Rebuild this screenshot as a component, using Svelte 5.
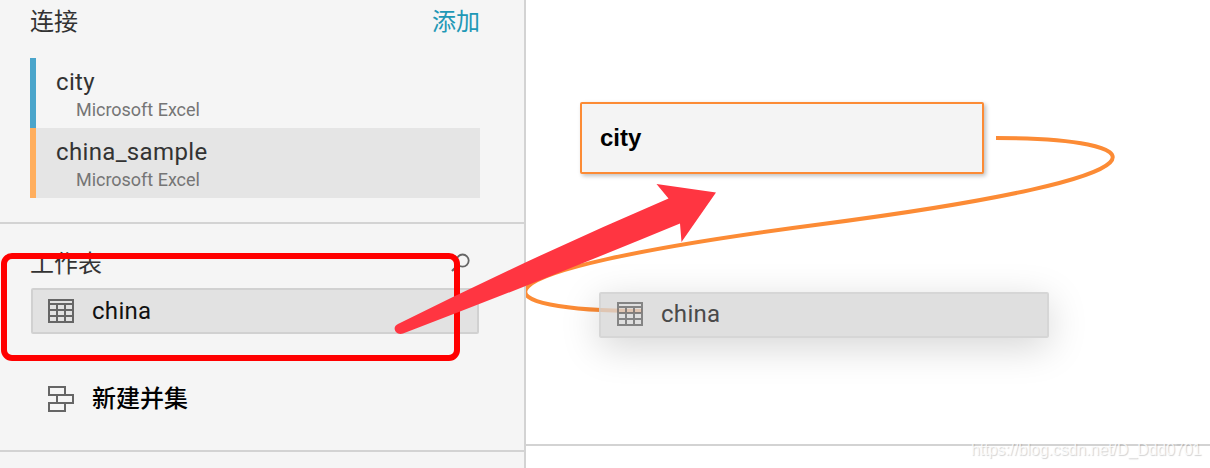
<script>
  const connections = [
    { name: 'city', type: 'Microsoft Excel', color: '#4aa5cb', selected: false },
    { name: 'china_sample', type: 'Microsoft Excel', color: '#ffae5e', selected: true }
  ];
</script>

{#snippet tableIcon()}
  <svg class="icon" width="26" height="24" viewBox="0 0 26 24" fill="none" stroke="#666" stroke-width="2">
    <path d="M1 1H25V23H1ZM1 5H25M1 11H25M1 17H25M9 5V23M17 5V23" />
  </svg>
{/snippet}

<div class="app">
  <aside>
    <section class="connections">
      <header>
        <h2>连接</h2>
        <a class="add" href="#add">添加</a>
      </header>
      <ul>
        {#each connections as c}
          <li class:selected={c.selected} style="border-color: {c.color}">
            <span class="name">{c.name}</span>
            <span class="type">{c.type}</span>
          </li>
        {/each}
      </ul>
    </section>

    <section class="sheets">
      <header>
        <h2>工作表</h2>
        <svg class="search" width="20" height="20" viewBox="0 0 20 20" fill="none" stroke="#666" stroke-width="1.8">
          <circle cx="12.6" cy="7.6" r="6.1" />
          <path d="M8 12L2 18" stroke-width="2.2" />
        </svg>
      </header>
      <div class="sheet">
        {@render tableIcon()}
        <span class="sheet-name">china</span>
      </div>
      <div class="union">
        <svg class="icon" width="26" height="26" viewBox="0 0 26 26" fill="none" stroke="#666" stroke-width="2">
          <path d="M1 1H17V9H1ZM9 9H25V17H9ZM1 17H17V25H1Z" />
        </svg>
        <span>新建并集</span>
      </div>
    </section>
  </aside>

  <main>
    <div class="canvas">
      <svg class="link" width="684" height="444" viewBox="526 0 684 444" fill="none">
        <path d="M996 138C1151 138 1204 174.4 819 224.5S487 311 642 311" stroke="#fc8b35" stroke-width="4" />
      </svg>
      <div class="node">city</div>
      <div class="ghost">
        {@render tableIcon()}
        <span class="sheet-name">china</span>
      </div>
    </div>
  </main>

  <div class="highlight"></div>
  <svg class="arrow" width="1210" height="468" viewBox="0 0 1210 468">
    <path
      d="M398 324Q532 257 668.5 198.5L656.5 184L716 192.5L681.5 242L680 223.5Q541 281 403 333.5C396 336 391 327 398 324Z"
      fill="#ff3541"
    />
  </svg>
  <span class="watermark">https://blog.csdn.net/D_Ddd0701</span>
</div>

<style>
  :global(body) {
    margin: 0;
    overflow: hidden;
  }
  .app {
    position: relative;
    display: flex;
    width: 1210px;
    height: 468px;
    overflow: hidden;
    background: #fff;
    font-family: Roboto, 'Noto Sans CJK SC', sans-serif;
    color: #333;
  }
  aside {
    box-sizing: border-box;
    width: 526px;
    background: #f5f5f5;
    border-right: 2px solid #d3d3d3;
  }
  section {
    box-sizing: border-box;
    border-bottom: 2px solid #d3d3d3;
  }
  header {
    display: flex;
    justify-content: space-between;
    height: 36px;
  }
  h2,
  .add {
    margin: 0;
    font: 400 24px/32px 'Noto Sans CJK SC', sans-serif;
  }
  .add {
    color: #1f98b6;
    text-decoration: none;
  }
  .connections {
    height: 224px;
    padding: 4px 44px 0 30px;
  }
  ul {
    list-style: none;
    margin: 18px 0 0;
    padding: 0;
  }
  li {
    box-sizing: border-box;
    display: flex;
    flex-direction: column;
    height: 70px;
    padding: 9px 0 0 20px;
    border-left: 6px solid;
  }
  .selected {
    background: #e5e5e5;
  }
  .name {
    font-size: 24px;
    line-height: 30px;
    letter-spacing: 0.35px;
  }
  .type {
    margin-left: 20px;
    font-size: 18px;
    line-height: 26px;
    letter-spacing: -0.02px;
    color: #757575;
  }
  .sheets {
    height: 228px;
    padding: 22px 45px 0 31px;
  }
  .sheets h2 {
    margin-left: -1px;
  }
  .search {
    margin: 7px 9px 0 0;
  }
  .sheet,
  .ghost {
    box-sizing: border-box;
    display: flex;
    align-items: center;
    height: 46px;
    margin-top: 6px;
    padding-left: 15px;
    border: 2px solid #d1d1d1;
    border-radius: 2px;
    background: #e2e2e2;
    color: #111;
    font-size: 24px;
    line-height: 30px;
  }
  .icon {
    flex: none;
    margin-right: 18px;
  }
  .sheet-name {
    letter-spacing: 0.3px;
  }
  .union {
    display: flex;
    align-items: center;
    height: 40px;
    margin-top: 45px;
    padding-left: 17px;
    color: #000;
    font: 500 24px/36px 'Noto Sans CJK SC', sans-serif;
  }
  .union span {
    padding-bottom: 4px;
  }
  main {
    flex: 1;
  }
  .canvas {
    position: relative;
    height: 444px;
    border-bottom: 2px solid #d3d3d3;
  }
  .link {
    position: absolute;
    inset: 0;
  }
  .node {
    position: absolute;
    left: 54px;
    top: 102px;
    box-sizing: border-box;
    width: 404px;
    height: 72px;
    padding-left: 18px;
    border: 2px solid #fc8b35;
    border-radius: 2px;
    background: #f4f4f4;
    box-shadow: 2px 2px 4px rgba(0, 0, 0, 0.25);
    color: #000;
    font: bold 24px/68px 'Liberation Sans', sans-serif;
  }
  .ghost {
    position: absolute;
    left: 73px;
    top: 292px;
    width: 450px;
    height: 46px;
    margin: 0;
    padding: 0 0 2px 16px;
    background: rgba(214, 214, 214, 0.78);
    border-color: rgba(200, 200, 200, 0.4);
    box-shadow: 0 9px 38px rgba(0, 0, 0, 0.17);
    color: #4a4a4a;
  }
  .ghost .icon {
    opacity: 0.75;
  }
  .highlight {
    position: absolute;
    left: 1px;
    top: 253px;
    box-sizing: border-box;
    width: 459px;
    height: 108px;
    border: 6px solid #f00;
    border-radius: 11px;
  }
  .arrow {
    position: absolute;
    inset: 0;
  }
  .watermark {
    position: absolute;
    left: 971px;
    top: 440px;
    font: 16px/20px 'Liberation Sans', sans-serif;
    letter-spacing: -0.09px;
    color: rgba(255, 255, 255, 0.8);
    text-shadow: 1px 1px 1px rgba(0, 0, 0, 0.18);
  }
</style>
